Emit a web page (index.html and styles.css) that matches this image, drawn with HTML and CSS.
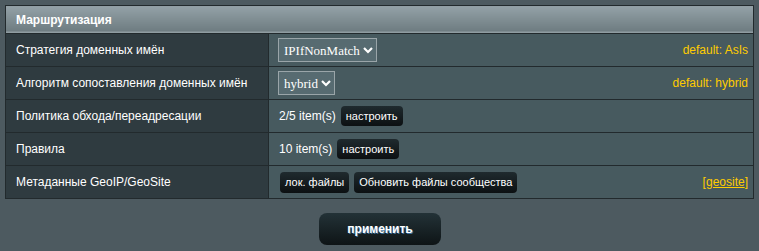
FILE: index.html
```html
<!DOCTYPE html>
<html lang="ru">
<head>
   <meta charset="UTF-8">
   <title>Маршрутизация</title>
   <link rel="stylesheet" href="styles.css">
</head>
<body>
   <table class="route-table">
       <colgroup>
           <col class="label-col">
           <col>
       </colgroup>
       <thead>
           <tr>
               <td class="table-title" colspan="2">Маршрутизация</td>
           </tr>
       </thead>
       <tbody>
           <tr>
               <th>Стратегия доменных имён</th>
               <td>
                   <div class="cell-row">
                       <select class="input-select">
                           <option>IPIfNonMatch</option>
                       </select>
                       <span class="hint">default: AsIs</span>
                   </div>
               </td>
           </tr>
           <tr>
               <th>Алгоритм сопоставления доменных имён</th>
               <td>
                   <div class="cell-row">
                       <select class="input-select">
                           <option>hybrid</option>
                       </select>
                       <span class="hint">default: hybrid</span>
                   </div>
               </td>
           </tr>
           <tr>
               <th>Политика обхода/переадресации</th>
               <td>
                   <div class="cell-row">
                       <span class="items">2/5 item(s)</span>
                       <button class="small-button">настроить</button>
                   </div>
               </td>
           </tr>
           <tr>
               <th>Правила</th>
               <td>
                   <div class="cell-row">
                       <span class="items">10 item(s)</span>
                       <button class="small-button">настроить</button>
                   </div>
               </td>
           </tr>
           <tr>
               <th>Метаданные GeoIP/GeoSite</th>
               <td>
                   <div class="cell-row">
                       <button class="small-button wide">лок. файлы</button>
                       <button class="small-button wide">Обновить файлы сообщества</button>
                       <span class="hint">[<a href="#" class="hint-link">geosite</a>]</span>
                   </div>
               </td>
           </tr>
       </tbody>
   </table>

   <div class="apply-row">
       <button class="apply-button">применить</button>
   </div>
</body>
</html>
```

FILE: styles.css
```css
:root {
    --page-bg: #4d5a60;
    --label-bg: #2f3b40;
    --value-bg: #475a5f;
    --line: #222a2d;
    --hint: #ffcc00;
    --white: #ffffff;
}

* {
    margin: 0;
    padding: 0;
    box-sizing: border-box;
}

body {
    background: var(--page-bg);
    font-family: 'Liberation Sans', Arial, sans-serif;
    color: var(--white);
    padding: 5px;
}

.route-table {
    width: 749px;
    border-collapse: collapse;
    border: 1px solid var(--line);
    table-layout: fixed;
}

.label-col {
    width: 263px;
}

.table-title {
    height: 28px;
    padding: 0 10px;
    font-size: 12px;
    font-weight: bold;
    text-align: left;
    background: linear-gradient(to bottom, #93a1a7 0%, #6d7b80 94%, #8f9ca1 94%);
}

.route-table th,
.route-table td {
    border: 1px solid var(--line);
}

.route-table th {
    height: 33px;
    padding: 0 10px;
    background: var(--label-bg);
    font-size: 12px;
    font-weight: normal;
    text-align: left;
    white-space: nowrap;
}

.route-table tbody td {
    background: var(--value-bg);
    padding: 0 5px 0 10px;
    font-size: 12px;
}

.cell-row {
    display: flex;
    align-items: center;
    gap: 5px;
}

.input-select {
    appearance: none;
    -webkit-appearance: none;
    height: 24px;
    margin-left: -1px;
    padding: 0 16px 0 5px;
    background: #576b71 url("data:image/svg+xml,%3Csvg xmlns='http://www.w3.org/2000/svg' width='10' height='8' viewBox='0 0 10 8'%3E%3Cpath d='M1 2 L5 6 L9 2' fill='none' stroke='%23ffffff' stroke-width='2.2'/%3E%3C/svg%3E") no-repeat right 3px center;
    border: 1px solid #9aa5a9;
    color: var(--white);
    font-family: 'Liberation Serif', 'Times New Roman', serif;
    font-size: 13px;
}

.hint {
    margin-left: auto;
    color: var(--hint);
    font-size: 12px;
}

.hint-link {
    color: var(--hint);
}

.small-button {
    height: 20px;
    padding: 0 5px;
    border: none;
    border-radius: 4px;
    background: linear-gradient(to bottom, #1f2a2e 0%, #0c1012 100%);
    color: var(--white);
    font-family: 'Liberation Sans', Arial, sans-serif;
    font-size: 11px;
}

.small-button.wide {
    height: 21px;
}

.small-button.wide:first-child {
    margin-left: 1px;
}

.apply-row {
    display: flex;
    justify-content: center;
    padding-top: 14px;
}

.apply-button {
    width: 122px;
    height: 32px;
    margin-left: 1px;
    border: none;
    border-radius: 8px;
    background: linear-gradient(to bottom, #233237 0%, #0e1416 100%);
    color: var(--white);
    font-family: 'Liberation Sans', Arial, sans-serif;
    font-size: 12px;
    font-weight: bold;
    text-shadow: 1px 1px 0 #3a6e9a;
}
```
